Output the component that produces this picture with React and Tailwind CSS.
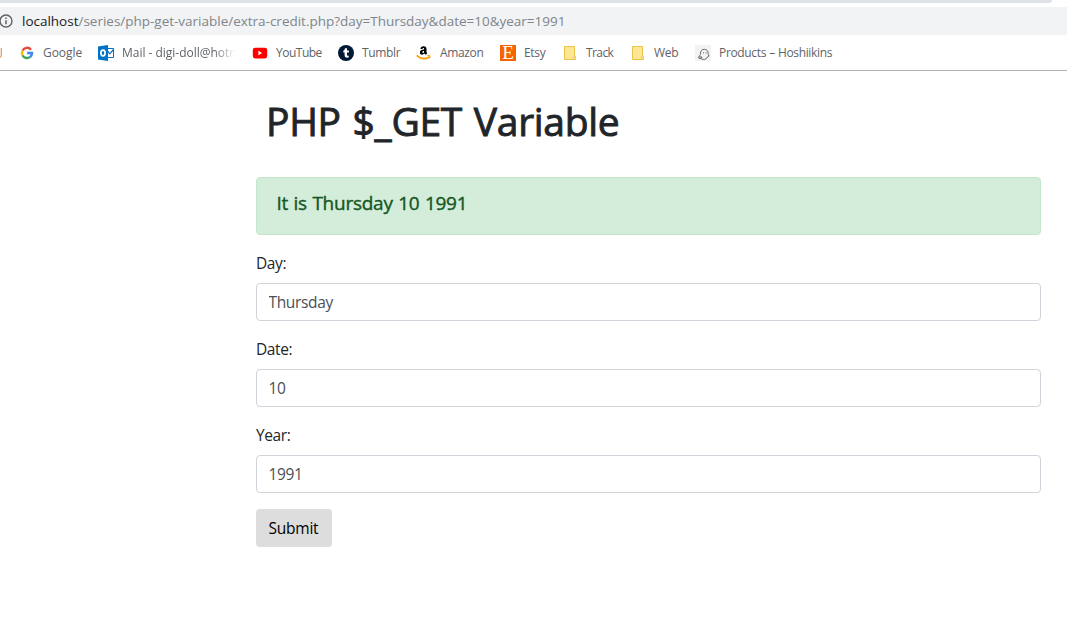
import React from "react";

const GoogleIcon = () => (
  <svg viewBox="0 0 16 16" className="size-4 shrink-0">
    <g fill="none" strokeWidth="2.5">
      <path d="M3.6 5.5A5 5 0 0 1 11.9 4.7" stroke="#ea4335" />
      <path d="M3.6 5.5A5 5 0 0 0 3.6 10.5" stroke="#fbbc05" />
      <path d="M3.6 10.5A5 5 0 0 0 11.1 11.9" stroke="#34a853" />
      <path d="M8.1 8H13A5 5 0 0 1 11.1 11.9" stroke="#4285f4" />
    </g>
  </svg>
);

const OutlookIcon = () => (
  <svg viewBox="0 0 16 16" className="size-4 shrink-0">
    <path d="M9 3.5h6.500v9H9z" fill="#fff" stroke="#0072c6" />
    <path d="M9.500 6l2.300 2.800 3.700-4.300" fill="none" stroke="#0072c6" strokeWidth="1.2" />
    <path d="M0 1.6L10 0v16L0 14.4z" fill="#0072c6" />
    <ellipse cx="5" cy="8" rx="2.1" ry="2.8" fill="none" stroke="#fff" strokeWidth="1.7" />
  </svg>
);

const YouTubeIcon = () => (
  <svg viewBox="0 0 16 16" className="size-4 shrink-0">
    <rect x="0.8" y="2.7" width="14.4" height="10.8" rx="2.4" fill="#f00" />
    <path d="M6.4 5.8v4.5L10.1 8z" fill="#fff" />
  </svg>
);

const TumblrIcon = () => (
  <svg viewBox="0 0 16 16" className="size-4 shrink-0">
    <circle cx="8" cy="8" r="8" fill="#001935" />
    <path d="M6.900 3.200h2.100v2.300h1.900v1.900H9v2.500c0 .8.700 1 1.800.5v1.900c-2.200.9-4.200.2-4.200-2V7.400H5.300V5.800c1.100-.4 1.500-1.200 1.600-2.600z" fill="#fff" />
  </svg>
);

const AmazonIcon = () => (
  <svg viewBox="0 0 16 16" className="size-4 shrink-0">
    <path d="M4.400 3.900C4.700 1.900 6.100 1.200 7.500 1.200c2.200 0 3 1 3 2.700v2.700c0 .9.2 1.200.7 1.900L9.700 9.800 8.300 8.600C6.700 10.400 3.900 9.800 3.900 7.400c0-2.100 1.800-2.800 4.200-2.900 0-1.100-.1-1.500-.8-1.500-.5 0-.7.4-.8 1.100zM8.100 6c-1.300 0-1.800.4-1.800 1.300 0 1.200 1.800 1.100 1.800-.6z" fill="#000" />
    <path d="M1.300 10.900c3.700 3.200 8 3.400 11.700 1.400" fill="none" stroke="#f90" strokeWidth="1.700" strokeLinecap="round" />
    <path d="M11.400 10.700c2.400-.4 3.200 0 2 2.600" fill="none" stroke="#f90" strokeWidth="1.200" />
  </svg>
);

const EtsyIcon = () => (
  <span className="flex size-4 shrink-0 items-center justify-center bg-[#f56400] font-['Liberation_Serif',serif] text-[19px] leading-4 text-white">
    E
  </span>
);

const FolderIcon = () => (
  <svg viewBox="0 0 16 16" className="size-4 shrink-0">
    <path d="M2.500 1.500h10v9l.9.500v3.500H2.500z" fill="#ffe694" stroke="#e8c547" />
    <path d="M11.600 13.700v-2.500l1-.9" fill="none" stroke="#e8c547" strokeWidth=".9" />
  </svg>
);

const GhostIcon = () => (
  <svg viewBox="0 0 16 16" className="size-4 shrink-0">
    <rect width="16" height="16" fill="#f3f3f3" />
    <path d="M5.500 8.200C5.500 5.900 7 4.300 9.300 4.300s3.900 1.700 3.900 4.200c0 1 .3 1.700.9 2.500l-1.500.8c-.8 1.800-2.300 2.700-4 2.700-1.300 0-2-.4-2.700-1.100-1.500.5-2.700-.2-2.500-1.300.2-.8 1.200-.9 1.600-1.700.4-.7.500-1.400.5-2.200zM3.900 12h3.200l-1 1.300" fill="none" stroke="#666" strokeWidth="1" />
    <path d="M8.500 7.200v1.300M11.200 7.200v1.300" stroke="#777" strokeWidth=".9" />
  </svg>
);

const bookmarks = [
  { label: "Google", Icon: GoogleIcon, box: "w-[79px]", text: "tracking-[-0.05px]" },
  { label: "Mail - digi-doll@hotm", Icon: OutlookIcon, box: "w-[154px]", text: "w-[113px] overflow-hidden tracking-[-0.02px] [mask-image:linear-gradient(to_right,black_82%,transparent)]" },
  { label: "YouTube", Icon: YouTubeIcon, box: "w-[86px]", text: "tracking-[-0.5px]" },
  { label: "Tumblr", Icon: TumblrIcon, box: "w-[78px]", text: "tracking-[-0.35px]" },
  { label: "Amazon", Icon: AmazonIcon, box: "w-[84px]", text: "tracking-[-0.35px]" },
  { label: "Etsy", Icon: EtsyIcon, box: "w-[62px]", text: "tracking-[-0.3px]" },
  { label: "Track", Icon: FolderIcon, box: "w-[68px]", text: "tracking-[-0.6px]" },
  { label: "Web", Icon: FolderIcon, box: "w-[65px]", text: "tracking-[-0.3px]" },
  { label: "Products – Hoshiikins", Icon: GhostIcon, box: "w-[150px]", text: "tracking-[-0.34px] [word-spacing:0.3px]" },
];

function BrowserBar() {
  return (
    <header className="h-[71px] border-b border-[#b1b1b1]">
      <div className="mb-1 h-[3px] w-[1052px] rounded-br-[6px] bg-[#dee1e6]" />
      <div className="flex h-7 items-center bg-[#f1f3f4]">
        <svg viewBox="0 0 14 14" className="-ml-px size-[14px] shrink-0">
          <circle cx="7" cy="7" r="6" fill="none" stroke="#5f6368" strokeWidth="1.400" />
          <path d="M7 6.300v4M7 3.500v1.500" stroke="#5f6368" strokeWidth="1.500" />
        </svg>
        <span className="ml-[9px] whitespace-nowrap text-[13.500px] leading-5 tracking-[-0.01px] text-[#80868b]">
          <span className="text-[#202124]">localhost</span>/series/php-get-variable/extra-credit.php?day=Thursday&amp;date=10&amp;year=1991
        </span>
      </div>
      <nav className="flex h-9 items-center text-[12px] text-[#5f6368]">
        <span className="w-[19px] shrink-0">
          <svg viewBox="0 0 4 10" className="h-[10px] w-1">
            <path d="M1.300 0v6.500Q1.300 9 0 9" fill="none" stroke="#e8955a" strokeWidth="1.200" />
          </svg>
        </span>
        {bookmarks.map(({ label, Icon, box, text }) => (
          <span key={label} className={`flex shrink-0 items-center gap-2 ${box}`}>
            <Icon />
            <span className={`whitespace-nowrap leading-4 ${text}`}>{label}</span>
          </span>
        ))}
      </nav>
    </header>
  );
}

function Field({ label, value }) {
  return (
    <div className="mb-4">
      <label className="mb-2 block text-[15.500px] leading-6 tracking-[-0.4px] text-[#212529]">{label}</label>
      <input
        className="block h-[38px] w-full rounded border border-[#ced4da] bg-white pr-3 pl-[11.500px] text-[15.500px] tracking-[-0.35px] text-[#495057] outline-none"
        defaultValue={value}
      />
    </div>
  );
}

export default function App() {
  return (
    <div className="h-[642px] overflow-hidden bg-white font-['Open_Sans',sans-serif]">
      <BrowserBar />
      <main className="ml-64 w-[785px] pt-[26px]">
        <h1 className="ml-[10px] text-[39px] leading-[48px] tracking-[-0.3px] whitespace-nowrap text-[#212529] [word-spacing:2px] [-webkit-text-stroke:0.9px_#212529]">
          PHP $_GET Variable
        </h1>
        <div className="mt-8 mb-4 h-[58px] rounded border border-[#c3e6cb] bg-[#d4edda] pt-[13px] pl-[19.500px]">
          <h5 className="text-[19px] leading-6 tracking-[-0.25px] text-[#155724] [word-spacing:0.8px] [-webkit-text-stroke:0.4px_#155724]">
            It is Thursday 10 1991
          </h5>
        </div>
        <form onSubmit={(e) => e.preventDefault()}>
          <Field label="Day:" value="Thursday" />
          <Field label="Date:" value="10" />
          <Field label="Year:" value="1991" />
          <button className="h-[38px] w-[76px] rounded bg-[#ddd] pt-0.5 pr-px text-[15.500px] tracking-[-0.25px] text-black">Submit</button>
        </form>
      </main>
    </div>
  );
}
